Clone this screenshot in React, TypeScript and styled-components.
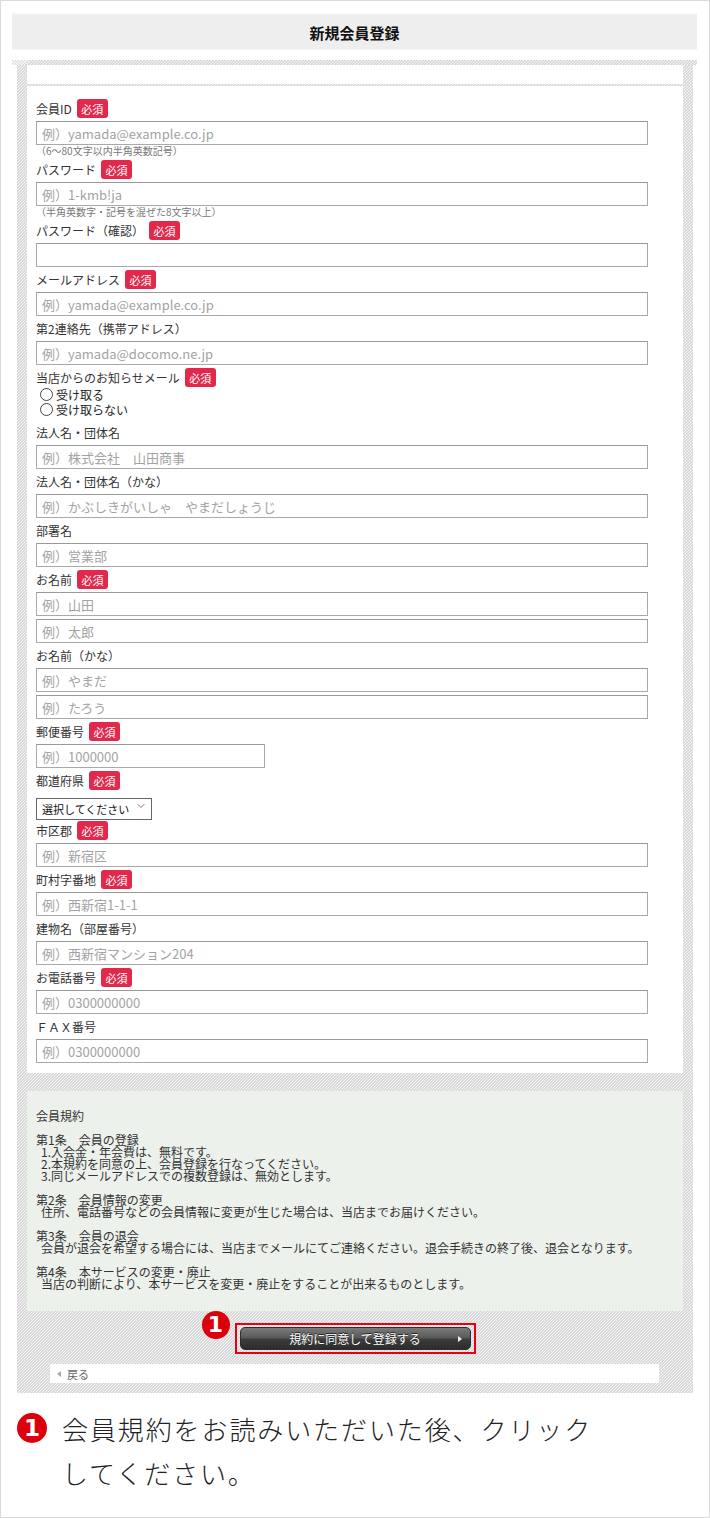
import React from "react";
import styled, { createGlobalStyle } from "styled-components";
import { ChevronDown } from "lucide-react";

const GlobalStyle = createGlobalStyle`
  html, body {
    margin: 0;
    padding: 0;
    background: #fff;
  }
  body {
    font-family: "Noto Sans CJK JP", "Noto Sans", sans-serif;
    color: #333;
  }
`;

// 45° stripes with a 3px horizontal period, aligned to the pixel grid
const hatch = `repeating-linear-gradient(135deg, #d9d9d9 0 0.72px, #f4f4f4 0.72px 2.12132px)`;

const Page = styled.div`
  width: 710px;
  height: 1518px;
  box-sizing: border-box;
  border: 1px solid #dadada;
  padding-top: 12px;
  overflow: hidden;
`;

const Header = styled.div`
  margin: 0 12px 0 11px;
  height: 34px;
  border-top: 2px solid #f6f6f6;
  border-bottom: 1px solid #f6f6f6;
  background: #eeeeee;
  display: flex;
  align-items: center;
  justify-content: center;
  font-size: 15px;
  font-weight: 700;
  color: #111;
`;

const HatchTop = styled.div`
  margin: 10px 12px 0 11px;
  height: 5px;
  background: ${hatch};
`;

const HatchPanel = styled.div`
  margin: 0 16px;
  padding: 0 10px 10px;
  background: ${hatch};
  display: flex;
  flex-direction: column;
`;

const TopBar = styled.div`
  height: 19px;
  margin-bottom: 2px;
  background: #fff;
`;

const FormPanel = styled.div`
  background: #fff;
  padding: 10px 9px 10px;
`;

const LabelRow = styled.div`
  height: 25px;
  display: flex;
  align-items: center;
  font-size: 12px;
  color: #333;
`;

const Badge = styled.span`
  display: inline-flex;
  align-items: center;
  justify-content: center;
  width: 31px;
  height: 19px;
  margin-left: 5px;
  border-radius: 3px;
  background: #e2294c;
  color: #fff;
  font-size: 11px;
`;

const TextInput = styled.input<{ $width?: number; $stacked?: boolean }>`
  display: block;
  box-sizing: border-box;
  width: ${(p) => p.$width ?? 612}px;
  height: 24px;
  margin: ${(p) => (p.$stacked ? "3px" : "0")} 0 0;
  padding: 0 5px;
  border: 1px solid #a9a9a9;
  border-top-color: #999;
  border-radius: 0;
  background: #fff;
  font-family: inherit;
  font-size: 13px;
  color: #333;
  outline: none;
  &::placeholder {
    color: #a3a3a3;
  }
`;

const Hint = styled.div`
  height: 12px;
  line-height: 12px;
  font-size: 10px;
  color: #777;
`;

const RadioGroup = styled.div`
  margin: -3px 0 3px;
  padding-left: 4px;
  display: flex;
  flex-direction: column;
`;

const RadioItem = styled.label`
  height: 15px;
  display: flex;
  align-items: center;
  gap: 3px;
  font-size: 12px;
  color: #222;
`;

const RadioDot = styled.span`
  width: 11px;
  height: 11px;
  border: 1px solid #444;
  border-radius: 50%;
  background: #fff;
`;

const SelectWrap = styled.div`
  position: relative;
  width: 116px;
  height: 22px;
  margin: 2px 0 1px;
`;

const Select = styled.select`
  width: 100%;
  height: 100%;
  box-sizing: border-box;
  appearance: none;
  border: 1px solid #666;
  border-radius: 0;
  background: #fff;
  padding: 0 16px 0 5px;
  font-family: inherit;
  font-size: 11px;
  color: #111;
`;

const SelectArrow = styled.span`
  position: absolute;
  right: 5px;
  top: 5px;
  color: #555;
  pointer-events: none;
  display: flex;
`;

const Gap = styled.div`
  height: 18px;
`;

const Terms = styled.div`
  background: #edf1ec;
  padding: 19px 9px 21px;
  font-size: 12px;
  line-height: 12px;
  color: #333;
`;

const TermLine = styled.div<{ $indent?: boolean }>`
  height: 12px;
  padding-left: ${(p) => (p.$indent ? "5px" : "0")};
  white-space: nowrap;
`;

const ButtonRow = styled.div`
  margin-top: 12px;
  display: flex;
  justify-content: center;
`;

const RedFrame = styled.div`
  position: relative;
  border: 2px solid #e60012;
  padding: 2px 3px;
`;

const NumberMark = styled.span<{ $size: number }>`
  display: inline-flex;
  align-items: center;
  justify-content: center;
  flex-shrink: 0;
  width: ${(p) => p.$size}px;
  height: ${(p) => p.$size}px;
  border-radius: 50%;
  background: #dc000c;
  color: #fff;
  font-family: "DejaVu Sans", sans-serif;
  font-weight: 700;
  font-size: ${(p) => Math.round(p.$size * 0.78)}px;
  line-height: 1;
`;

const FrameMark = styled(NumberMark)`
  position: absolute;
  right: calc(100% + 7px);
  top: -14px;
`;

const SubmitButton = styled.button`
  position: relative;
  width: 231px;
  height: 23px;
  border: 1px solid #2e2e2e;
  border-radius: 5px;
  background: linear-gradient(#7a7a7a 0%, #5a5a5a 45%, #3c3c3c 55%, #2c2c2c 100%);
  color: #fff;
  font-family: inherit;
  font-size: 12px;
  text-shadow: 0 -1px 0 #222;
  display: flex;
  align-items: center;
  justify-content: center;
  padding: 0;
`;

const ButtonArrow = styled.span`
  position: absolute;
  right: 8px;
  top: 8px;
  width: 0;
  height: 0;
  border-left: 4px solid #eee;
  border-top: 3px solid transparent;
  border-bottom: 3px solid transparent;
`;

const BackBar = styled.div`
  margin: 10px 24px 0 23px;
  height: 19px;
  background: #fff;
  display: flex;
  align-items: center;
  padding-left: 7px;
  gap: 6px;
  font-size: 11px;
  color: #666;
`;

const BackArrow = styled.span`
  width: 0;
  height: 0;
  border-right: 4px solid #aaa;
  border-top: 3px solid transparent;
  border-bottom: 3px solid transparent;
`;

const Note = styled.div`
  display: flex;
  gap: 15px;
  padding: 14px 0 0 16px;
  & > span:first-child {
    margin-top: 6px;
  }
`;

const NoteText = styled.p`
  margin: 0;
  width: 545px;
  font-size: 26px;
  line-height: 44px;
  letter-spacing: 1.9px;
  font-weight: 300;
  color: #222;
`;

type Field = {
  label: string;
  required?: boolean;
  inputs?: string[];
  width?: number;
  hint?: string;
  kind?: "input" | "radio" | "select";
};

const fields: Field[] = [
  { label: "会員ID", required: true, inputs: ["例）yamada@example.co.jp"], hint: "（6〜80文字以内半角英数記号）" },
  { label: "パスワード", required: true, inputs: ["例）1-kmb!ja"], hint: "（半角英数字・記号を混ぜた8文字以上）" },
  { label: "パスワード（確認）", required: true, inputs: [""] },
  { label: "メールアドレス", required: true, inputs: ["例）yamada@example.co.jp"] },
  { label: "第2連絡先（携帯アドレス）", inputs: ["例）yamada@docomo.ne.jp"] },
  { label: "当店からのお知らせメール", required: true, kind: "radio" },
  { label: "法人名・団体名", inputs: ["例）株式会社　山田商事"] },
  { label: "法人名・団体名（かな）", inputs: ["例）かぶしきがいしゃ　やまだしょうじ"] },
  { label: "部署名", inputs: ["例）営業部"] },
  { label: "お名前", required: true, inputs: ["例）山田", "例）太郎"] },
  { label: "お名前（かな）", inputs: ["例）やまだ", "例）たろう"] },
  { label: "郵便番号", required: true, inputs: ["例）1000000"], width: 229 },
  { label: "都道府県", required: true, kind: "select" },
  { label: "市区郡", required: true, inputs: ["例）新宿区"] },
  { label: "町村字番地", required: true, inputs: ["例）西新宿1-1-1"] },
  { label: "建物名（部屋番号）", inputs: ["例）西新宿マンション204"] },
  { label: "お電話番号", required: true, inputs: ["例）0300000000"] },
  { label: "ＦＡＸ番号", inputs: ["例）0300000000"] },
];

const terms: { text: string; indent?: boolean }[] = [
  { text: "会員規約" },
  { text: "" },
  { text: "第1条　会員の登録" },
  { text: "1.入会金・年会費は、無料です。", indent: true },
  { text: "2.本規約を同意の上、会員登録を行なってください。", indent: true },
  { text: "3.同じメールアドレスでの複数登録は、無効とします。", indent: true },
  { text: "" },
  { text: "第2条　会員情報の変更" },
  { text: "住所、電話番号などの会員情報に変更が生じた場合は、当店までお届けください。", indent: true },
  { text: "" },
  { text: "第3条　会員の退会" },
  { text: "会員が退会を希望する場合には、当店までメールにてご連絡ください。退会手続きの終了後、退会となります。", indent: true },
  { text: "" },
  { text: "第4条　本サービスの変更・廃止" },
  { text: "当店の判断により、本サービスを変更・廃止をすることが出来るものとします。", indent: true },
];

function FieldBlock({ field }: { field: Field }) {
  return (
    <div>
      <LabelRow>
        {field.label}
        {field.required && <Badge>必須</Badge>}
      </LabelRow>
      {field.kind === "radio" && (
        <RadioGroup>
          <RadioItem>
            <RadioDot />
            受け取る
          </RadioItem>
          <RadioItem>
            <RadioDot />
            受け取らない
          </RadioItem>
        </RadioGroup>
      )}
      {field.kind === "select" && (
        <SelectWrap>
          <Select defaultValue="">
            <option value="">選択してください</option>
          </Select>
          <SelectArrow>
            <ChevronDown size={12} strokeWidth={1.6} />
          </SelectArrow>
        </SelectWrap>
      )}
      {field.inputs?.map((ph, i) => (
        <TextInput key={i} placeholder={ph} $width={field.width} $stacked={i > 0} readOnly />
      ))}
      {field.hint && <Hint>{field.hint}</Hint>}
    </div>
  );
}

export default function App() {
  return (
    <Page>
      <GlobalStyle />
      <Header>新規会員登録</Header>
      <HatchTop />
      <HatchPanel>
        <TopBar />
        <FormPanel>
          {fields.map((f) => (
            <FieldBlock key={f.label} field={f} />
          ))}
        </FormPanel>
        <Gap />
        <Terms>
          {terms.map((t, i) => (
            <TermLine key={i} $indent={t.indent}>
              {t.text}
            </TermLine>
          ))}
        </Terms>
        <ButtonRow>
          <RedFrame>
            <FrameMark $size={28}>1</FrameMark>
            <SubmitButton type="button">
              規約に同意して登録する
              <ButtonArrow />
            </SubmitButton>
          </RedFrame>
        </ButtonRow>
        <BackBar>
          <BackArrow />
          戻る
        </BackBar>
      </HatchPanel>
      <Note>
        <NumberMark $size={30}>1</NumberMark>
        <NoteText>会員規約をお読みいただいた後、クリックしてください。</NoteText>
      </Note>
    </Page>
  );
}
